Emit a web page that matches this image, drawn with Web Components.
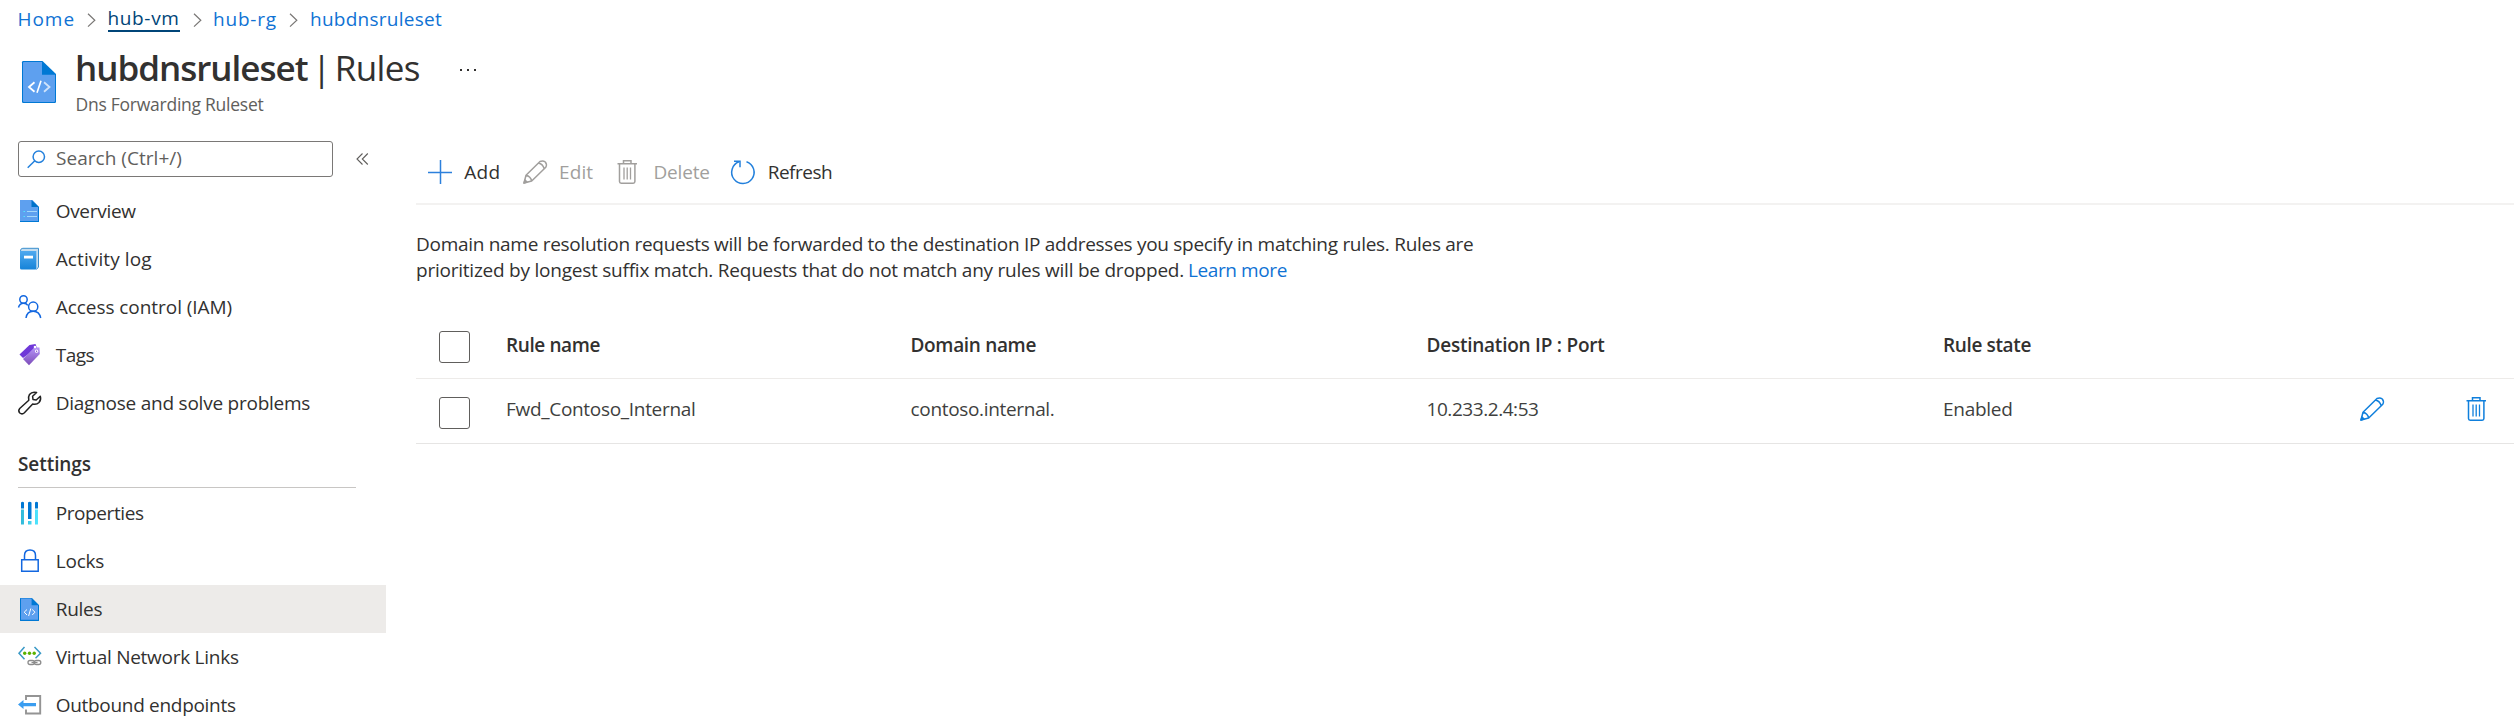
<!DOCTYPE html>
<html lang="en">
<head>
<meta charset="utf-8">
<title>hubdnsruleset | Rules</title>
<style>
  html, body { margin: 0; background: #fff; }
  body { font: 19px/26px "Open Sans", "Noto Sans", sans-serif; color: #323130; overflow: hidden; }
</style>
</head>
<body>
<portal-page></portal-page>
<script>
const ICONS = {
  file: '<path d="M2 1h12.5L21 8v15H2z" fill="#5ea0ef"/><path d="M2 22h18V8h1v15H2z" fill="#0078d4"/><path d="M13.5 1 21 8h-7.5z" fill="#0072c9"/><path d="M9 12.5h10M9 17.5h10" stroke="#a5d8fa"/><path d="M5.5 12.5H7M5.5 17.5H7" stroke="#50e6ff"/>',
  code: '<path d="M2 1.6q0-.6.6-.6H14l7 7v15.4q0 .6-.6.6H2.600q-.6 0-.6-.6z" fill="#0078d4"/><path d="M3 1.600h10.600V8.200H20V22.800H3z" fill="#5ea0ef"/><path d="M9 12.500 6.200 15.200 9 18M14.200 12.500l2.800 2.700L14.200 18M12.800 11.500l-2.200 7.500" stroke="#fff" fill="none"/>',
  codebig: '<path d="M1 2.200Q1 1 2.200 1H21.500L35 14v27.800q0 1.200-1.200 1.200H2.200Q1 43 1 41.800z" fill="#0078d4"/><path d="M2 3q0-1 1-1h18v12.700h13V41q0 1-1 1H3q-1 0-1-1z" fill="#5ea0ef"/><path d="M13.500 22.300 8 27l5.500 4.700" stroke="#fff" stroke-width="1.800" fill="none"/><path d="M23 22.300l5.500 4.700-5.500 4.700" stroke="#cfe3fb" stroke-width="1.800" fill="none"/><path d="M20 20.700l-4 12" stroke="#fff" stroke-width="1.600"/>',
  book: '<defs><linearGradient id="g" x2="0" y2="1"><stop stop-color="#4fa9ef"/><stop offset="1" stop-color="#1583d8"/></linearGradient></defs><path d="M4 1.200H20.500V20L18 22V4H3z" fill="#c4dcee"/><path d="M2.500 4q0-2.700 2.300-2.700H20.500V20L18.500 22.500" fill="none" stroke="#3a8fce"/><path d="M2 4H18.300V21.500q0 1-1 1H3.500Q2 22.500 2 21z" fill="url(#g)"/><path d="M6 8.700h9v2.800H6z" fill="#fff"/>',
  people: '<g fill="none" stroke="#1267e0" stroke-width="1.500"><circle cx="5.500" cy="4.500" r="3.700"/><circle cx="15.200" cy="11.700" r="4.600"/><path d="M.5 12.500Q1.600 8.200 5.500 8.200 8.500 8.200 9.800 10.300M8 23Q9 16.300 15.200 16.300T22.700 23"/></g>',
  tag: '<defs><linearGradient id="g" x2="0" y2="1"><stop stop-color="#b796f9"/><stop offset="1" stop-color="#7b4bb8"/></linearGradient></defs><path d="M1.500 11.500 11.500 2 17.500 1 19 5 5 15z" fill="#6f38d8"/><path d="M5 16 16.500 4.200 21.500 4.600 21.800 11 11 22.300z" fill="url(#g)"/><circle cx="17" cy="4" r="1.300" fill="#fff"/><circle cx="18.600" cy="8.200" r="1.600" fill="#fff"/><circle cx="18.600" cy="8.200" r=".7" fill="#8050c8"/>',
  wrench: '<path d="M18.600 1.500Q14 .2 11.500 3.500 9.900 6 10.800 9.200L1.700 17.500Q-.2 19.800 1.800 22 4.200 23.900 6.400 21.700L14.700 13Q18.500 14 21 11.500 23.400 8.700 22.300 5.200L18.200 9 15 8.400 14.600 5.300z" fill="none" stroke="#222" stroke-width="1.500" stroke-linejoin="round"/>',
  props: '<defs><linearGradient id="g"><stop stop-color="#32b8d8"/><stop offset="1" stop-color="#50e6ff"/></linearGradient></defs><path d="M3 8.500h3v15H3zM10 20h3.500v3.500H10zM17 8.500h3v15h-3z" fill="url(#g)"/><path d="M3 1.500q1.500-1.500 3 0V7.500H3zM10 1.500q1.700-1.500 3.500 0V18H10zM17 1.500q1.500-1.500 3 0V7.500h-3z" fill="#0078d4"/>',
  lock: '<g fill="none" stroke="#1267e0" stroke-width="1.500"><path d="M3.700 10.700h16.500v11.500H3.700zM6.500 10.700V6.500Q6.500 1 12 1T17.500 6.500v4.200"/></g>',
  vnet: '<path d="M6.500 2 1 8.200l5.500 6M16.500 2l6 6.200-5 5" fill="none" stroke="#3999c6" stroke-width="1.500"/><g fill="#59b300"><circle cx="6.700" cy="8.200" r="1.700"/><circle cx="11.500" cy="8.200" r="1.700"/><circle cx="16.200" cy="8.200" r="1.700"/></g><g fill="none" stroke="#8c8c8c" stroke-width="1.300"><rect x="10" y="15.500" width="6.500" height="4" rx="2"/><rect x="16.300" y="15.500" width="6.500" height="4" rx="2"/><path d="M13.500 17.500h6"/></g>',
  outbound: '<path d="M8 7V3H22.200V20.500H8V16.500" fill="none" stroke="#949494" stroke-width="1.900"/><path d="M0 11.500 5.500 7v3H18v3.200H5.500V16z" fill="#3a9df0"/>',
  plus: '<path d="M12.500 0v24M0 12.500h24" stroke="#2c80dc" stroke-width="1.500"/>',
  pencil: '<g fill="none" stroke="currentColor" stroke-width="1.500" stroke-linejoin="round"><path d="M1 23 3 15.200 17 1.500Q20 .2 22.300 2 24.300 4.400 22.800 7.200L8.700 21zM3 15.200Q7.600 16.300 8.700 21M15.500 3Q19.800 4 21.200 8.700"/><path d="M1 23 2 20 4 22z" fill="currentColor"/></g>',
  trash: '<g fill="none" stroke="currentColor" stroke-width="1.500"><path d="M.5 3.700h19.500M2.500 4v17.500q0 1.700 1.700 1.700h12q1.700 0 1.700-1.700V4M6.500 3.500V.8H14v2.700"/><path d="M7 7.500v12M10.200 7.500v12M13.500 7.500v12" stroke-width="1.300"/></g>',
  refresh: '<g fill="none" stroke="#2380dc" stroke-width="1.500"><path d="M15.500 1.700A11.200 11.200 0 1 1 8 1.800"/><path d="M3 1.200h6v6"/></g>',
  search: '<g fill="none" stroke="#2380dc" stroke-width="1.500"><circle cx="11.800" cy="6.700" r="5.700"/><path d="M7.800 10.700.7 17.700"/></g>',
  chevron: '<path d="M1 .8 7.800 7.200 1 13.600" fill="none" stroke="#797775" stroke-width="1.200"/>',
  collapse: '<path d="M6.500.5 1 6l5.500 5.500M11.800.5 6.300 6l5.500 5.500" fill="none" stroke="#605e5c" stroke-width="1.100"/>',
  dots: '<g fill="#323130"><path d="M0 0h2v2H0zM7 0h2v2H7zM14 0h2v2h-2z"/></g>'
};

function define(name, css, html, setup) {
  customElements.define(name, class extends HTMLElement {
    connectedCallback() {
      if (this.shadowRoot) return;
      const root = this.attachShadow({ mode: 'open' });
      root.innerHTML = '<style>' + css + '</style>' + (typeof html === 'function' ? html(this) : html);
      if (setup) setup(this, root);
    }
  });
}

define('fit-text', ':host{display:inline-block;white-space:nowrap;flex:none}', '<slot></slot>', el => {
  if (!el.hasAttribute('w')) return;
  const target = parseFloat(el.getAttribute('w'));
  const natural = el.getBoundingClientRect().width;
  el.style.letterSpacing = ((target - natural) / el.textContent.length).toFixed(3) + 'px';
});

define('ui-icon', ':host{display:block;flex:none}svg{display:block;overflow:visible}', el => {
  const w = el.getAttribute('w') || 24, h = el.getAttribute('h') || 24;
  return `<svg width="${w}" height="${h}" viewBox="0 0 ${w} ${h}">${ICONS[el.getAttribute('name')]}</svg>`;
});

define('bread-crumbs', `
  :host{display:flex;align-items:center;height:38px;padding-left:17.500px;color:#0f72d4}
  ui-icon{margin-top:2px}
  .hover{color:#004578;box-shadow:0 2px #004578;line-height:22px;height:23px;margin-top:-1px}
`, `
  <fit-text w="57.500">Home</fit-text><ui-icon name="chevron" w="9" h="14" style="margin-left:11.500px;margin-right:12px"></ui-icon>
  <fit-text class="hover" w="72">hub-vm</fit-text><ui-icon name="chevron" w="9" h="14" style="margin-left:13px;margin-right:11.500px"></ui-icon>
  <fit-text w="64">hub-rg</fit-text><ui-icon name="chevron" w="9" h="14" style="margin-left:12px;margin-right:12px"></ui-icon>
  <fit-text w="132">hubdnsruleset</fit-text>`);

define('blade-header', `
  :host{display:flex;height:72px;padding:6px 0 0 21px}
  .doc{margin-top:16px;width:54px}
  .title{display:flex;font-size:35px;line-height:48px;height:48px}
  .sub{font-size:17.500px;line-height:24px;color:#605e5c;padding-left:.5px}
  .dots{margin:25px 0 0 40px}
`, `
  <ui-icon class="doc" name="codebig" w="36" h="44"></ui-icon>
  <div><div class="title"><fit-text w="232.500" style="font-weight:600">hubdnsruleset</fit-text><fit-text style="margin:0 3.500px 0 4.500px">|</fit-text><fit-text w="85">Rules</fit-text><ui-icon class="dots" name="dots" w="16" h="2"></ui-icon></div>
  <div class="sub"><fit-text w="188">Dns Forwarding Ruleset</fit-text></div></div>`);

define('search-box', `
  :host{display:flex;align-items:center;margin:25px 0 10px 18px}
  .box{display:flex;align-items:center;box-sizing:border-box;width:315px;height:36px;border:1px solid #7a7876;border-radius:3px;padding-left:8px;color:#605e5c}
  .box fit-text{margin:-2px 0 0 10px}
  .col{margin:0 0 0 23px}
`, `<div class="box"><ui-icon name="search" w="19" h="19"></ui-icon><fit-text w="126">Search (Ctrl+/)</fit-text></div><ui-icon class="col" name="collapse" w="12" h="12"></ui-icon>`);

define('nav-item', `
  :host{display:flex;align-items:center;height:48px;padding-left:18px}
  :host([selected]){background:#edebe9}
  fit-text{margin:0 0 0 13.700px}
`, el => `<ui-icon name="${el.getAttribute('icon')}"></ui-icon><fit-text w="${el.getAttribute('w')}">${el.textContent}</fit-text>`);

define('side-nav', `
  :host{display:block;width:386px;flex:none}
  .group{display:flex;align-items:flex-end;box-sizing:border-box;height:61px;width:338px;margin:0 0 1px 18px;border-bottom:1px solid #c8c6c4;padding-bottom:10px;font-weight:600}
`, `
  <search-box></search-box>
  <nav-item icon="file" w="80">Overview</nav-item>
  <nav-item icon="book" w="96">Activity log</nav-item>
  <nav-item icon="people" w="176.500">Access control (IAM)</nav-item>
  <nav-item icon="tag" w="38.500">Tags</nav-item>
  <nav-item icon="wrench" w="254.500">Diagnose and solve problems</nav-item>
  <div class="group"><fit-text w="73">Settings</fit-text></div>
  <nav-item icon="props" w="88">Properties</nav-item>
  <nav-item icon="lock" w="48.500">Locks</nav-item>
  <nav-item icon="code" w="46.500" selected>Rules</nav-item>
  <nav-item icon="vnet" w="183">Virtual Network Links</nav-item>
  <nav-item icon="outbound" w="180">Outbound endpoints</nav-item>`);

define('tool-button', `
  :host{display:flex;align-items:center}
  :host([disabled]){color:#a19f9d}
  fit-text{margin:-1px 0 0 12.300px}
`, el => `<ui-icon name="${el.getAttribute('icon')}"></ui-icon><fit-text w="${el.getAttribute('w')}">${el.textContent}</fit-text>`);

define('command-bar', `
  :host{display:flex;align-items:center;height:62px;margin-top:25px;padding-left:12px;border-bottom:2px solid #f3f2f1}
`, `
  <tool-button icon="plus" w="36">Add</tool-button>
  <tool-button icon="pencil" w="34" disabled style="margin-left:22.500px">Edit</tool-button>
  <tool-button icon="trash" w="56.500" disabled style="margin-left:24px">Delete</tool-button>
  <tool-button icon="refresh" w="64.500" style="margin-left:21.500px">Refresh</tool-button>`);

define('check-box', `:host{display:block;box-sizing:border-box;width:31px;height:32px;border:1.500px solid #605e5c;border-radius:3px}`, '');

define('rule-row', `
  :host{display:grid;grid-template-columns:90px 404.500px 516px 516.500px 417px 106px 1fr;align-items:center;height:64px;border-bottom:1px solid #e6e5e4;color:#403f3e}
  :host([head]){height:62px;font-weight:600;color:#323130;border-color:#edebe9}
  check-box{margin:4px 0 0 23px}
  :host([head]) check-box{margin-top:0}
  ::slotted(*){margin-bottom:4px;justify-self:start}
`, '<check-box></check-box><slot></slot>');

define('rules-table', `:host{display:block;margin-top:33px}ui-icon{color:#0f7fdc}`, `
  <rule-row head><fit-text w="94">Rule name</fit-text><fit-text w="125.500">Domain name</fit-text><fit-text w="178">Destination IP : Port</fit-text><fit-text w="88">Rule state</fit-text></rule-row>
  <rule-row><fit-text w="189.500">Fwd_Contoso_Internal</fit-text><fit-text w="144">contoso.internal.</fit-text><fit-text w="112">10.233.2.4:53</fit-text><fit-text w="69.500">Enabled</fit-text><ui-icon name="pencil"></ui-icon><ui-icon name="trash" w="22"></ui-icon></rule-row>`);

define('rules-blade', `
  :host{display:block;flex:1;margin-left:30px}
  p{margin:26px 0 0;white-space:nowrap}
  .line{display:flex;height:26px}
  .link{color:#0f72d4;margin-left:4px}
`, `
  <command-bar></command-bar>
  <p><span class="line"><fit-text w="1057.500">Domain name resolution requests will be forwarded to the destination IP addresses you specify in matching rules. Rules are</fit-text></span>
  <span class="line"><fit-text w="768">prioritized by longest suffix match. Requests that do not match any rules will be dropped.</fit-text><fit-text class="link" w="99">Learn more</fit-text></span></p>
  <rules-table></rules-table>`);

define('portal-page', `:host{display:block;width:2514px;height:727px;overflow:hidden}.body{display:flex}`, `
  <bread-crumbs></bread-crumbs>
  <blade-header></blade-header>
  <div class="body"><side-nav></side-nav><rules-blade></rules-blade></div>`);
</script>
</body>
</html>
